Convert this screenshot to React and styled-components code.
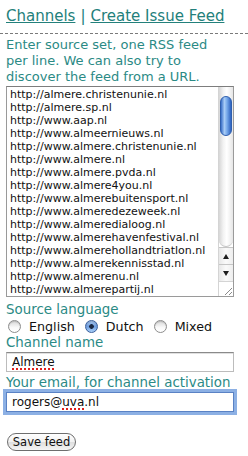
import React from 'react'
import styled, { createGlobalStyle } from 'styled-components'

const GlobalStyle = createGlobalStyle`
  html, body {
    margin: 0;
    padding: 0;
    background: #fff;
  }
  body {
    font-family: "DejaVu Sans", Verdana, sans-serif;
    color: #2b8a85;
    overflow: hidden;
  }
`

const Page = styled.div`
  width: 248px;
  padding: 0 6px;
  box-sizing: border-box;
`

const Nav = styled.div`
  margin: 0 -6px;
  padding: 5px 6px 6px;
  font-size: 15px;
  line-height: 22px;
  border-bottom: 1px dashed #7a7a7a;
  color: #23807b;
  white-space: nowrap;
`

const NavLink = styled.a`
  color: #23807b;
  text-decoration: underline;
`

const Sep = styled.span`
  padding: 0 5px;
`

const Intro = styled.p`
  margin: 3px 0 1px;
  width: 222px;
  font-size: 13px;
  line-height: 16px;
`

const FeedBox = styled.div`
  display: flex;
  width: 228px;
  height: 211px;
  box-sizing: border-box;
  border: 1px solid #9a9a9a;
  border-top-color: #7d7d7d;
  background: #fff;
`

const Feeds = styled.textarea`
  flex: 1;
  min-width: 0;
  margin: 0;
  padding: 1px 0 0 3px;
  border: 0;
  font-family: "DejaVu Sans", "Lucida Grande", sans-serif;
  font-size: 11px;
  line-height: 13px;
  color: #111;
  resize: none;
  overflow: hidden;
  white-space: pre;
  outline: none;
`

const ScrollCol = styled.div`
  width: 14px;
  display: flex;
  flex-direction: column;
  border-left: 1px solid #d4d4d4;
`

const Track = styled.div`
  flex: 1;
  padding: 9px 1px 0 1px;
  border-radius: 0 0 7px 7px;
  border-bottom: 1px solid #c4c4c4;
  background: linear-gradient(to right, #d6d6d6, #f2f2f2 30%, #ffffff 55%, #e6e6e6);
`

const Thumb = styled.div`
  height: 40px;
  border-radius: 6px;
  border: 1px solid #2f5fae;
  box-sizing: border-box;
  background: linear-gradient(to right, #3a6fc8, #a8ccf6 35%, #77a9ea 60%, #2d62c0);
`

const Arrow = styled.div`
  height: 16px;
  display: flex;
  align-items: center;
  justify-content: center;
  border-top: 1px solid #c6c6c6;
  background: linear-gradient(to right, #e8e8e8, #fafafa 50%, #eeeeee);

  &::before {
    content: '';
    width: 0;
    height: 0;
    border-left: 3.5px solid transparent;
    border-right: 3.5px solid transparent;
    ${p =>
      p.$down
        ? 'border-top: 5px solid #1e1e1e;'
        : 'border-bottom: 5px solid #1e1e1e;'}
  }
`

const Corner = styled.div`
  height: 14px;
  display: flex;
  align-items: flex-end;
  justify-content: flex-end;
  border-top: 1px solid #d4d4d4;
  background: #fff;
`

const Label = styled.div`
  font-size: 13.4px;
  line-height: 16px;
  margin-top: ${p => p.$top || 0}px;
`

const RadioRow = styled.div`
  display: flex;
  align-items: center;
  height: 16px;
  font-size: 12.7px;
  color: #111;
`

const RadioOption = styled.label`
  display: flex;
  align-items: center;
  margin-right: 8px;
`

const Radio = styled.span`
  box-sizing: border-box;
  width: 13px;
  height: 13px;
  margin: 0 8px 0 2px;
  border-radius: 50%;
  border: 1px solid ${p => (p.$on ? '#3a5f9c' : '#8d8d8d')};
  background: ${p =>
    p.$on
      ? 'radial-gradient(circle at 50% 50%, #1c2a44 0 2px, transparent 2.6px), linear-gradient(#a9c8ef, #6f9ee0 50%, #a9d0f8)'
      : 'linear-gradient(#d8d8d8, #fafafa 60%, #ffffff)'};
  box-shadow: inset 0 1px 1px rgba(0, 0, 0, 0.15);
`

const Field = styled.div`
  box-sizing: border-box;
  width: 228px;
  height: 20px;
  margin-top: 1px;
  padding: 0 0 0 5px;
  display: flex;
  align-items: center;
  border: 1px solid #bcbcbc;
  border-top-color: #8a8a8a;
  font-family: "DejaVu Sans", "Lucida Grande", sans-serif;
  font-size: 12px;
  color: #111;
  background: #fff;
  box-shadow: ${p => (p.$focus ? '0 0 0 3px #8cb0e4' : 'inset 0 1px 0 #e0e0e0')};
  ${p => p.$focus && 'border-color: #5a82c4;'}
`

const Misspelt = styled.span`
  text-decoration: underline dotted #e0201c;
  text-decoration-thickness: 2px;
  text-underline-offset: 2px;
`

const Actions = styled.div`
  padding-top: 19px;
  padding-left: 1px;
`

const Button = styled.button`
  height: 18px;
  width: 69px;
  padding: 0;
  border: 1px solid #6e6e6e;
  border-radius: 9px;
  background: linear-gradient(#ffffff, #f1f1f1 50%, #dedede 51%, #f5f5f5);
  font-family: "DejaVu Sans", "Lucida Grande", sans-serif;
  font-size: 11.5px;
  color: #111;
`

const feeds = [
  'http://almere.christenunie.nl',
  'http://almere.sp.nl',
  'http://www.aap.nl',
  'http://www.almeernieuws.nl',
  'http://www.almere.christenunie.nl',
  'http://www.almere.nl',
  'http://www.almere.pvda.nl',
  'http://www.almere4you.nl',
  'http://www.almerebuitensport.nl',
  'http://www.almeredezeweek.nl',
  'http://www.almeredialoog.nl',
  'http://www.almerehavenfestival.nl',
  'http://www.almerehollandtriatlon.nl',
  'http://www.almerekennisstad.nl',
  'http://www.almerenu.nl',
  'http://www.almerepartij.nl',
  'http://www.almerepoort.nl',
  'http://www.almeresport.nl',
  'http://www.almerevandaag.nl',
]

export default function App() {
  return (
    <Page>
      <GlobalStyle />
      <Nav>
        <NavLink href="#">Channels</NavLink>
        <Sep>|</Sep>
        <NavLink href="#">Create Issue Feed</NavLink>
      </Nav>
      <Intro>
        Enter source set, one RSS feed per line. We can also try to discover the feed from a URL.
      </Intro>
      <FeedBox>
        <Feeds defaultValue={feeds.join('\n')} spellCheck={false} />
        <ScrollCol>
          <Track>
            <Thumb />
          </Track>
          <Arrow />
          <Arrow $down />
          <Corner>
            <svg width="9" height="9" viewBox="0 0 9 9">
              <path d="M1 8 L8 1 M5 8 L8 5" stroke="#8a8a8a" strokeWidth="1" />
            </svg>
          </Corner>
        </ScrollCol>
      </FeedBox>
      <Label $top={5}>Source language</Label>
      <RadioRow>
        <RadioOption>
          <Radio />
          English
        </RadioOption>
        <RadioOption>
          <Radio $on />
          Dutch
        </RadioOption>
        <RadioOption>
          <Radio />
          Mixed
        </RadioOption>
      </RadioRow>
      <Label $top={1}>Channel name</Label>
      <Field>
        <Misspelt>Almere</Misspelt>
      </Field>
      <Label $top={3}>Your email, for channel activation</Label>
      <Field $focus>
        rogers@<Misspelt>uva</Misspelt>.nl
      </Field>
      <Actions>
        <Button>Save feed</Button>
      </Actions>
    </Page>
  )
}
